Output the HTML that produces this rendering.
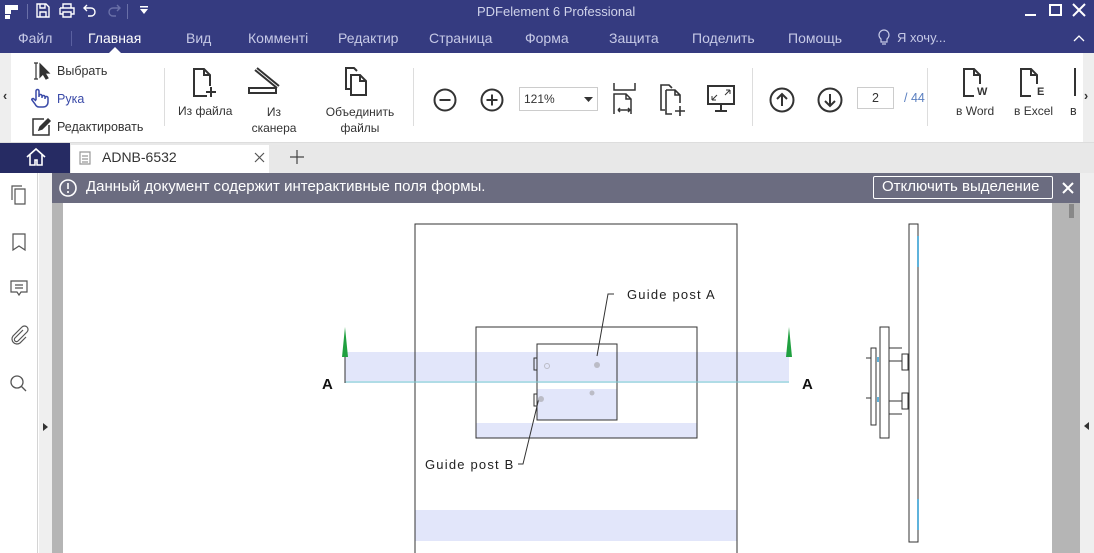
<!DOCTYPE html>
<html><head><meta charset="utf-8"><style>
*{margin:0;padding:0;box-sizing:border-box}
body{width:1094px;height:553px;overflow:hidden;position:relative;font-family:"Liberation Sans","Noto Sans CJK SC",sans-serif;background:#fff}
.a{position:absolute}
.t{font-size:12.5px;color:#333;white-space:nowrap}
.m{position:absolute;top:30px;font-size:14px;color:#c6c9e6;white-space:nowrap}
svg{position:absolute;overflow:visible}
</style></head><body>
<div class="a" style="left:0;top:0;width:1094px;height:53px;background:#353b80"></div>
<div class="a t" style="left:477px;top:4px;color:#d0d3ea;font-size:13px">PDFelement 6 Professional</div>
<svg style="left:4px;top:4px" width="16" height="16"><path d="M1 1h13v5H7v4H1z M1 11h5v4H1z" fill="#fff"/></svg>
<div class="a" style="left:27px;top:4px;width:1px;height:15px;background:#6a70a8"></div>
<svg style="left:36px;top:3px" width="14" height="15" fill="none" stroke="#fff" stroke-width="1.4"><path d="M1 1h9l3 3v10H1z M4 1v4h5V1 M4 14v-5h6v5"/></svg>
<svg style="left:59px;top:3px" width="16" height="15" fill="none" stroke="#fff" stroke-width="1.4"><path d="M4 5V1h8v4 M1 5h14v6h-3 M4 11H1V5 M4 9h8v5H4z"/></svg>
<svg style="left:83px;top:3px" width="14" height="14" fill="none" stroke="#fff" stroke-width="1.4"><path d="M4 2L1 5l3 3 M1 5h7a4 4 0 010 8H5"/></svg>
<svg style="left:107px;top:3px" width="14" height="14" fill="none" stroke="#6a70a8" stroke-width="1.4"><path d="M10 2l3 3-3 3 M13 5H6a4 4 0 000 8h3"/></svg>
<div class="a" style="left:127px;top:4px;width:1px;height:15px;background:#6a70a8"></div>
<svg style="left:139px;top:5px" width="10" height="10"><path d="M1 1h8v1.5H1z M1 4h8L5 9z" fill="#fff"/></svg>
<div class="a" style="left:1025px;top:14px;width:11px;height:2px;background:#fff"></div>
<div class="a" style="left:1049px;top:4px;width:13px;height:12px;border:2px solid #fff"></div>
<svg style="left:1072px;top:3px" width="14" height="14" stroke="#fff" stroke-width="2"><path d="M1 1l12 12M13 1L1 13"/></svg>
<div class="m" style="left:18px">Файл</div>
<div class="a" style="left:71px;top:31px;width:1px;height:15px;background:#5a60a0"></div>
<div class="m" style="left:88px;color:#fff">Главная</div>
<svg style="left:109px;top:47px" width="12" height="6"><path d="M0 6L6 0l6 6z" fill="#fff"/></svg>
<div class="m" style="left:186px">Вид</div>
<div class="m" style="left:248px">Комменті</div>
<div class="m" style="left:338px">Редактир</div>
<div class="m" style="left:429px">Страница</div>
<div class="m" style="left:525px">Форма</div>
<div class="m" style="left:609px">Защита</div>
<div class="m" style="left:692px">Поделить</div>
<div class="m" style="left:788px">Помощь</div>
<svg style="left:878px;top:28px" width="12" height="18" fill="none" stroke="#c6c9e6" stroke-width="1.2"><path d="M3 11a5 5 0 116 0v3H3z M4 16h4"/></svg>
<div class="m" style="left:897px;font-size:13px">Я хочу...</div>
<svg style="left:1073px;top:35px" width="12" height="7" fill="none" stroke="#fff" stroke-width="1.3"><path d="M1 6l5-5 5 5"/></svg>
<div class="a" style="left:0;top:53px;width:11px;height:90px;background:#eee"></div>
<div class="a" style="left:1083px;top:53px;width:11px;height:90px;background:#eee"></div>
<div class="a" style="left:0;top:142px;width:1094px;height:1px;background:#ddd"></div>
<div class="a t" style="left:3px;top:89px;font-weight:bold">‹</div>
<div class="a t" style="left:1084px;top:89px;font-weight:bold">›</div>
<svg style="left:33px;top:62px" width="20" height="18" fill="none" stroke="#333" stroke-width="1.2"><path d="M1 1h4M3 1v16M1 17h4"/><path d="M7 2l0 13 3-3 3 5 2-1-3-5h4z" fill="#333"/></svg>
<div class="a t" style="left:57px;top:64px">Выбрать</div>
<svg style="left:30px;top:88px" width="20" height="20" fill="none" stroke="#3a4aa8" stroke-width="1.5"><path d="M6 12V3a1.5 1.5 0 013 0v6 M9 8a1.5 1.5 0 013 0v2 M12 9a1.5 1.5 0 013 0v2 M15 10a1.5 1.5 0 013 0v4c0 3-2 5-5 5H9c-2 0-3-1-4-3l-3-4c-1-1 1-2 2-1l2 2"/></svg>
<div class="a t" style="left:57px;top:92px;color:#3a4aa8">Рука</div>
<svg style="left:32px;top:117px" width="20" height="20" fill="none" stroke="#333" stroke-width="1.5"><path d="M12 2H1v16h16V8"/><path d="M7 13l1-3 8-8 2 2-8 8z" fill="#333"/></svg>
<div class="a t" style="left:57px;top:120px">Редактировать</div>
<div class="a" style="left:164px;top:68px;width:1px;height:58px;background:#ddd"></div>
<svg style="left:193px;top:68px" width="24" height="30" fill="none" stroke="#333" stroke-width="2"><path d="M14 28H1V1h10l6 6v11 M11 1v6h6"/><path d="M13 24h10M18 19v10"/></svg>
<div class="a t" style="left:178px;top:104px;font-size:12px">Из файла</div>
<svg style="left:248px;top:68px" width="32" height="28" fill="none" stroke="#333" stroke-width="2"><path d="M7 2l22 18M9 0l22 18 M1 20h27v5H1z"/></svg>
<div class="a t" style="left:244px;top:104px;text-align:center;width:60px;font-size:12px;line-height:16px">Из<br>сканера</div>
<svg style="left:345px;top:67px" width="24" height="30" fill="none" stroke="#333" stroke-width="2"><path d="M5 22H1V1h8l3 3 M6 8h9l6 6v14H6z M15 8v6h6"/></svg>
<div class="a t" style="left:305px;top:104px;text-align:center;width:110px;line-height:16px;font-size:12px">Объединить<br>файлы</div>
<div class="a" style="left:413px;top:68px;width:1px;height:58px;background:#ddd"></div>
<svg style="left:433px;top:88px" width="24" height="24" fill="none" stroke="#333" stroke-width="2"><circle cx="12" cy="12" r="10.5"/><path d="M6.5 12h11"/></svg>
<svg style="left:480px;top:88px" width="24" height="24" fill="none" stroke="#333" stroke-width="2"><circle cx="12" cy="12" r="10.5"/><path d="M6.5 12h11M12 6.5v11"/></svg>
<div class="a" style="left:519px;top:87px;width:79px;height:24px;border:1px solid #ccc"></div>
<div class="a t" style="left:524px;top:92px;font-size:12px">121%</div>
<svg style="left:584px;top:97px" width="9" height="5"><path d="M0 0h9L4.5 5z" fill="#333"/></svg>
<svg style="left:613px;top:83px" width="24" height="32" fill="none" stroke="#333" stroke-width="2"><path d="M1 0v7h21V0 M1 31V11h12l5 5v15 M13 11v5h5 M5 27h12M5 27l2-2M5 27l2 2M17 27l-2-2M17 27l-2 2" stroke-width="1.5"/></svg>
<svg style="left:660px;top:84px" width="28" height="32" fill="none" stroke="#333" stroke-width="2"><path d="M5 26H1V1h8l3 3 M6 6h9l5 5v8 M6 6v24h6 M15 6v5h5 M20 22v10M15 27h10" stroke-width="1.6"/></svg>
<svg style="left:707px;top:85px" width="28" height="28" fill="none" stroke="#333" stroke-width="2"><path d="M1 1h26v18H1z M14 19v6M8 26h12"/><path d="M5 15l5-5M19 5l4 0M23 5v4 M23 5l-5 5M5 15v-4M5 15h4" stroke-width="1"/></svg>
<div class="a" style="left:752px;top:68px;width:1px;height:58px;background:#ddd"></div>
<svg style="left:769px;top:87px" width="26" height="26" fill="none" stroke="#333" stroke-width="2"><circle cx="13" cy="13" r="11.5"/><path d="M13 19V7M8 12l5-5 5 5"/></svg>
<svg style="left:817px;top:87px" width="26" height="26" fill="none" stroke="#333" stroke-width="2"><circle cx="13" cy="13" r="11.5"/><path d="M13 7v12M8 14l5 5 5-5"/></svg>
<div class="a" style="left:857px;top:87px;width:37px;height:22px;border:1px solid #ccc"></div>
<div class="a t" style="left:872px;top:91px">2</div>
<div class="a t" style="left:904px;top:91px;color:#5a7fc0">/ 44</div>
<div class="a" style="left:927px;top:68px;width:1px;height:58px;background:#ddd"></div>
<svg style="left:963px;top:68px" width="26" height="30" fill="none" stroke="#333" stroke-width="2"><path d="M11 28H1V1h10l6 6v9 M11 1v6h6"/></svg>
<div class="a t" style="left:977px;top:86px;font-weight:bold;font-size:11px">W</div>
<div class="a t" style="left:956px;top:104px;font-size:12px">в Word</div>
<svg style="left:1020px;top:68px" width="26" height="30" fill="none" stroke="#333" stroke-width="2"><path d="M11 28H1V1h10l6 6v9 M11 1v6h6"/></svg>
<div class="a t" style="left:1037px;top:86px;font-weight:bold;font-size:11px">E</div>
<div class="a t" style="left:1014px;top:104px;font-size:12px">в Excel</div>
<div class="a" style="left:1074px;top:68px;width:2px;height:28px;background:#333"></div>
<div class="a t" style="left:1070px;top:104px">в</div>
<div class="a" style="left:0;top:143px;width:1094px;height:30px;background:#e8e8e8"></div>
<div class="a" style="left:0;top:143px;width:70px;height:30px;background:#262b63"></div>
<svg style="left:26px;top:148px" width="20" height="18" fill="none" stroke="#fff" stroke-width="1.6"><path d="M1 9L10 1l9 8 M4 7v10h5v-5h2v5h5V7"/></svg>
<div class="a" style="left:71px;top:145px;width:198px;height:28px;background:#fff"></div>
<svg style="left:79px;top:151px" width="12" height="14" fill="none" stroke="#999" stroke-width="1.2"><path d="M1 1h10v12H1z M3 5h6M3 8h6M3 11h6"/></svg>
<div class="a t" style="left:102px;top:149px;font-size:14px;color:#333">ADNB-6532</div>
<svg style="left:254px;top:152px" width="11" height="11" stroke="#555" stroke-width="1.2"><path d="M1 1l9 9M10 1l-9 9"/></svg>
<svg style="left:290px;top:150px" width="14" height="14" stroke="#444" stroke-width="1.2"><path d="M7 0v14M0 7h14"/></svg>
<div class="a" style="left:0;top:173px;width:38px;height:380px;background:#fff;border-right:1px solid #d4d4d4"></div>
<div class="a" style="left:39px;top:173px;width:13px;height:380px;background:#efefef"></div>
<svg style="left:11px;top:185px" width="16" height="20" fill="none" stroke="#555" stroke-width="1.2"><path d="M1 15V1h10 M4 4h10v15H4z"/></svg>
<svg style="left:12px;top:233px" width="14" height="18" fill="none" stroke="#555" stroke-width="1.2"><path d="M1 1h12v16l-6-4-6 4z"/></svg>
<svg style="left:10px;top:280px" width="18" height="17" fill="none" stroke="#555" stroke-width="1.2"><path d="M1 1h16v11h-6l-2 3-2-3H1z M5 5h8M5 8h8"/></svg>
<svg style="left:10px;top:325px" width="18" height="20" fill="none" stroke="#555" stroke-width="1.2"><path d="M13 5l-8 8a2 2 0 003 3l9-9a3.5 3.5 0 00-5-5l-9 9a5 5 0 007 7l6-6"/></svg>
<svg style="left:10px;top:375px" width="17" height="17" fill="none" stroke="#555" stroke-width="1.3"><circle cx="7" cy="7" r="6"/><path d="M11 11l5 5"/></svg>
<svg style="left:43px;top:423px" width="5" height="8"><path d="M0 0l5 4-5 4z" fill="#333"/></svg>
<div class="a" style="left:52px;top:173px;width:1028px;height:380px;background:#b5b5b5"></div>
<div class="a" style="left:1080px;top:173px;width:14px;height:380px;background:#efefef"></div>
<svg style="left:1084px;top:422px" width="5" height="8"><path d="M5 0L0 4l5 4z" fill="#333"/></svg>
<div class="a" style="left:63px;top:203px;width:989px;height:350px;background:#fff"></div>
<div class="a" style="left:1069px;top:204px;width:5px;height:14px;background:#888"></div>
<div class="a" style="left:52px;top:173px;width:1028px;height:30px;background:#6b6c80"></div>
<svg style="left:59px;top:179px" width="18" height="18" fill="none" stroke="#fff" stroke-width="1.6"><circle cx="9" cy="9" r="8"/><path d="M9 4v6M9 12v2"/></svg>
<div class="a t" style="left:86px;top:178px;font-size:15px;color:#fff">Данный документ содержит интерактивные поля формы.</div>
<div class="a" style="left:873px;top:176px;width:180px;height:23px;border:1px solid #fff;border-radius:2px"></div>
<div class="a t" style="left:882px;top:178px;font-size:15px;color:#fff">Отключить выделение</div>
<svg style="left:1062px;top:182px" width="12" height="12" stroke="#fff" stroke-width="2"><path d="M1 1l10 10M11 1L1 11"/></svg>
<svg style="left:0;top:0" width="1094" height="553">
<rect x="345" y="352" width="444" height="31" fill="#e2e6fa"/>
<rect x="476" y="423" width="221" height="15" fill="#e2e6fa"/>
<rect x="415" y="510" width="322" height="31" fill="#e2e6fa"/>
<rect x="537" y="389" width="80" height="31" fill="#e2e6fa"/>
<g fill="none" stroke="#333" stroke-width="1">
<rect x="415" y="224" width="322" height="330"/>
<rect x="476" y="327" width="221" height="111"/>
<rect x="537" y="344" width="80" height="76"/>
<path d="M537 358h-3v12h3 M537 394h-3v12h3"/>
<path d="M614 294h-6l-11 62 M518 464h5l16-66"/>
<rect x="909" y="224" width="9" height="318"/>
<rect x="880" y="327" width="9" height="111"/>
<rect x="871" y="348" width="5" height="77"/>
<rect x="902" y="354" width="6" height="16"/>
<rect x="902" y="393" width="6" height="16"/>
<path d="M889 348h13M889 361h13M889 401h13M889 414h13 M866 358h5M866 398h5"/>
</g>
<path d="M918 236v31M918 499v31M878 357v5M878 397v5" stroke="#2a9ad0" stroke-width="1.5"/>
<line x1="345" y1="382" x2="789" y2="382" stroke="#7fd2d2" stroke-width="1"/>
<g fill="#bbbcc6"><circle cx="547" cy="366" r="2.5" fill="none" stroke="#bbbcc6"/><circle cx="597" cy="365" r="3"/><circle cx="592" cy="393" r="2.5"/><circle cx="541" cy="399" r="3"/></g>
<path d="M345 327l-3 30h6z" fill="#20a040"/><path d="M789 327l-3 30h6z" fill="#20a040"/>
<line x1="345" y1="357" x2="345" y2="383" stroke="#333"/>
<text x="322" y="389" font-family="Liberation Sans, sans-serif" font-size="15" font-weight="bold" fill="#111">A</text>
<text x="802" y="389" font-family="Liberation Sans, sans-serif" font-size="15" font-weight="bold" fill="#111">A</text>
<text x="627" y="299" font-family="Liberation Sans, sans-serif" font-size="13" fill="#222" letter-spacing="1.2">Guide  post  A</text>
<text x="425" y="469" font-family="Liberation Sans, sans-serif" font-size="13" fill="#222" letter-spacing="1.2">Guide  post  B</text>
</svg>
</body></html>
